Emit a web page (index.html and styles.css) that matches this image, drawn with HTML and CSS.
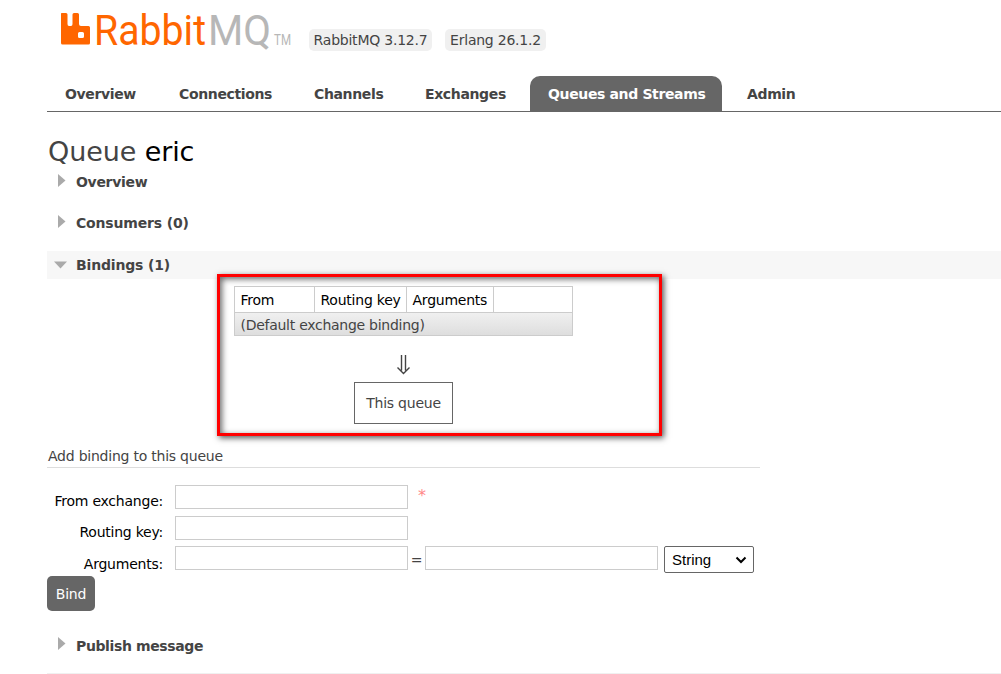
FILE: index.html
```html
<!DOCTYPE html>
<html lang="en">
<head>
<meta charset="utf-8">
<title>RabbitMQ Management</title>
<link rel="stylesheet" href="styles.css">
</head>
<body>
<header class="header">
  <svg class="logo" width="236" height="60" viewBox="0 -11 236 60" role="img" aria-label="RabbitMQ">
    <path fill="#f60" fill-rule="evenodd" d="M1.500 2H6Q7.500 2 7.500 3.500V13Q7.500 15 9 15H11Q12.500 15 12.500 13V3.500Q12.500 2 14 2H17.500Q19 2 19 3.500V13Q19 15 21 15H28.500Q30 15 30 16.500V32Q30 33.500 28.500 33.500H2.500Q1 33.500 1 32V3Q1 2 1.500 2ZM19.500 21Q18 21 18 22.500V25.500Q18 27 19.500 27H22.500Q24 27 24 25.500V22.500Q24 21 22.500 21Z"/>
    <text class="brand" x="34" y="33.500" textLength="112" lengthAdjust="spacingAndGlyphs" fill="#f60">Rabbit</text>
    <text class="brand" x="148" y="33.500" textLength="63" lengthAdjust="spacingAndGlyphs" fill="#b7b7b7">MQ</text>
    <text class="mark" x="214" y="34" textLength="17" lengthAdjust="spacingAndGlyphs" fill="#b7b7b7">TM</text>
  </svg>
  <span class="version rabbit">RabbitMQ 3.12.7</span>
  <span class="version erlang">Erlang 26.1.2</span>
</header>
<nav class="tabs">
  <a class="tab t1">Overview</a><a class="tab t2">Connections</a><a class="tab t3">Channels</a><a class="tab t4">Exchanges</a><a class="tab t5 selected">Queues and Streams</a><a class="tab t6">Admin</a>
</nav>
<main class="main">
  <h1 class="title">Queue <b class="name">eric</b></h1>
  <h2 class="section overview"><svg class="arrow" width="14" height="14"><path d="M4 0L11.500 6.500L4 13Z"/></svg><span>Overview</span></h2>
  <h2 class="section consumers"><svg class="arrow" width="14" height="14"><path d="M4 0L11.500 6.500L4 13Z"/></svg><span>Consumers (0)</span></h2>
  <h2 class="section bindings"><svg class="arrow down" width="14" height="14"><path d="M0 4.500H13L6.500 11.500Z"/></svg><span>Bindings (1)</span></h2>
  <div class="binding-area">
    <div class="marker"></div>
    <table class="binding-table">
      <colgroup><col class="c1"><col class="c2"><col class="c3"><col class="c4"></colgroup>
      <tr class="head"><th>From</th><th>Routing key</th><th>Arguments</th><th></th></tr>
      <tr class="row"><td colspan="4">(Default exchange binding)</td></tr>
    </table>
    <div class="flow">
      <svg class="down-arrow" width="14" height="20" viewBox="0 0 14 20"><path d="M4.500 0V15.500M8.500 0V15.500M0.500 12.500L6.500 18.500L12.500 12.500"/></svg>
      <span class="queue">This queue</span>
    </div>
  </div>
  <h3 class="subtitle">Add binding to this queue</h3>
  <form class="form">
    <label class="label from">From exchange:</label><div class="fields"><span class="input"></span><span class="required">*</span></div>
    <label class="label key">Routing key:</label><div class="fields"><span class="input"></span></div>
    <label class="label args">Arguments:</label><div class="fields"><span class="input"></span><span class="equals">=</span><span class="input"></span><span class="select"><span>String</span><svg width="12" height="8"><path d="M1.500 1.500L6 6L10.500 1.500"/></svg></span></div>
  </form>
  <button class="bind" type="button">Bind</button>
  <h2 class="section publish"><svg class="arrow" width="14" height="14"><path d="M4 0L11.500 6.500L4 13Z"/></svg><span>Publish message</span></h2>
</main>
</body>
</html>
```
FILE: styles.css
```css
* { box-sizing: border-box; }
body { margin: 0; height: 674px; overflow: hidden; background: #fff; color: #444; font: 14px/18px Verdana, "DejaVu Sans", sans-serif; letter-spacing: -.23px; }
.header { display: flex; height: 76px; padding-left: 60px; align-items: flex-start; }
.logo { flex: none; }
.brand { font: 400 42px Roboto, sans-serif; letter-spacing: 0; }
.mark { font: 14px Roboto, sans-serif; letter-spacing: 0; }
.version { height: 22px; margin: 29px 0 0 13px; border-radius: 5px; background: #f0f0f0; line-height: 22px; text-align: center; white-space: nowrap; }
.rabbit { width: 123px; }
.erlang { width: 101px; }
.tabs { display: flex; height: 36px; margin-left: 47px; border-bottom: 1px solid #666; }
.tab { height: 35px; padding: 0 18px; margin-right: 6px; border-radius: 10px 10px 0 0; font-weight: bold; letter-spacing: -.36px; line-height: 37px; white-space: nowrap; }
.t1 { width: 108px; } .t2 { width: 129px; } .t3 { width: 105px; } .t4 { width: 117px; } .t5 { width: 192px; } .t6 { width: 84px; }
.t6 { padding-left: 19px; }
.selected { background: #666; color: #fff; }
.main { padding-left: 47px; }
.title { height: 56px; margin: 0; padding: 21px 0 0 1px; font-size: 27px; line-height: 37px; font-weight: normal; letter-spacing: -.1px; }
.name { font-weight: normal; color: #000; }
.section { display: flex; height: 28px; margin: 0; padding-left: 7px; font-size: 14px; line-height: 28px; letter-spacing: -.17px; }
.section span { margin-left: 8px; }
.arrow { margin-top: 6px; fill: #aaa; }
.overview { margin-bottom: 13px; letter-spacing: -.3px; }
.consumers { margin-bottom: 14px; }
.bindings { background: #f7f7f7; }
.binding-area { position: relative; height: 167px; padding: 7px 0 0 187px; }
.marker { position: absolute; left: 170px; top: -5px; width: 445px; height: 162px; border: 3px solid red; box-shadow: 2px 2px 6px #555, inset 2px 2px 6px #666; }
.binding-table { width: 338px; border-collapse: collapse; table-layout: fixed; }
.c1 { width: 80px; } .c2 { width: 92px; } .c3 { width: 87px; } .c4 { width: 79px; }
.binding-table th, .binding-table td { padding: 0 5.5px; border: 1px solid #ccc; text-align: left; font-weight: normal; white-space: nowrap; }
.head { height: 26px; color: #000; }
.row { height: 23px; background: linear-gradient(#f0f0f0, #ddd); }
.binding-table td { padding-top: 1px; letter-spacing: -.27px; }
.flow { display: flex; flex-direction: column; align-items: center; width: 339px; padding-top: 19px; }
.down-arrow { fill: none; stroke: #444; stroke-width: 1.4; }
.queue { width: 99px; height: 42px; margin-top: 7px; border: 1px solid #666; line-height: 40px; text-align: center; }
.subtitle { width: 713px; height: 22px; margin: 0; padding-left: 1px; border-bottom: 1px solid #ddd; font-size: 14px; font-weight: normal; line-height: 20px; }
.form { display: grid; grid-template-columns: 116px auto; grid-template-rows: 31px 30px 30px; margin: 17px 0 0; column-gap: 12px; }
.label { color: #000; text-align: right; line-height: 32px; white-space: nowrap; }
.args { line-height: 36px; }
.fields { display: flex; }
.input { width: 233px; height: 24px; border: 1px solid #ccc; }
.required { margin-left: 10px; color: #f88; font-size: 16px; line-height: 22px; }
.equals { width: 17px; line-height: 28px; text-align: center; }
.select { display: flex; align-items: center; justify-content: space-between; width: 90px; height: 27px; margin-left: 6px; padding: 0 6px 0 7px; border: 1px solid #666; border-radius: 2px; color: #000; font: 15px "Liberation Sans", Arial, sans-serif; letter-spacing: 0; }
.select svg { fill: none; stroke: #000; stroke-width: 2; }
.bind { display: block; width: 48px; height: 35px; padding: 0; border: 0; border-radius: 5px; background: #666; color: #fff; font: inherit; letter-spacing: -.23px; }
.publish { height: 43px; margin-top: 20px; border-bottom: 1px solid #f0f0f0; line-height: 30px; letter-spacing: -.38px; }
```
